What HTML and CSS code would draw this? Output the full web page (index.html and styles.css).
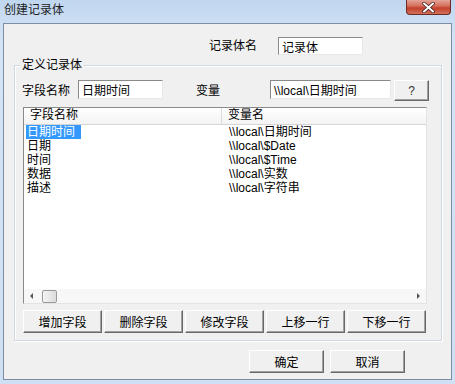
FILE: index.html
```html
<!DOCTYPE html>
<html lang="zh-CN">
<head>
  <meta charset="utf-8">
  <title>创建记录体</title>
  <link rel="stylesheet" href="styles.css">
</head>
<body>
  <div class="window">
    <div class="titlebar">
      <span class="title">创建记录体</span>
      <span class="close">
        <svg width="13" height="11" viewBox="0 0 13 11">
          <path d="M2 1.5 L11 9.5 M11 1.5 L2 9.5" stroke="#3b1a1a" stroke-width="3.4" stroke-linecap="round"/>
          <path d="M2 1.5 L11 9.5 M11 1.5 L2 9.5" stroke="#fff" stroke-width="2" stroke-linecap="round"/>
        </svg>
      </span>
    </div>

    <div class="client">
      <div class="name-row">
        <span class="label">记录体名</span>
        <div class="edit edit-name">记录体</div>
      </div>

      <div class="group">
        <div class="legend">定义记录体</div>

        <div class="field-row">
          <span class="label">字段名称</span>
          <div class="edit edit-field">日期时间</div>
          <span class="label label-var">变量</span>
          <div class="edit edit-var">\\local\日期时间</div>
          <div class="btn btn-help">?</div>
        </div>

        <div class="list">
          <div class="list-head">
            <div class="col col1">字段名称</div>
            <div class="col col2">变量名</div>
          </div>
          <div class="list-body">
            <div class="list-row">
              <div class="col col1"><span class="selected">日期时间</span></div>
              <div class="col col2">\\local\日期时间</div>
            </div>
            <div class="list-row">
              <div class="col col1"><span class="item">日期</span></div>
              <div class="col col2">\\local\$Date</div>
            </div>
            <div class="list-row">
              <div class="col col1"><span class="item">时间</span></div>
              <div class="col col2">\\local\$Time</div>
            </div>
            <div class="list-row">
              <div class="col col1"><span class="item">数据</span></div>
              <div class="col col2">\\local\实数</div>
            </div>
            <div class="list-row">
              <div class="col col1"><span class="item">描述</span></div>
              <div class="col col2">\\local\字符串</div>
            </div>
          </div>
          <div class="hscroll">
            <span class="arrow arrow-left"></span>
            <span class="thumb"></span>
            <span class="track"></span>
            <span class="arrow arrow-right"></span>
          </div>
        </div>

        <div class="btn-row">
          <div class="btn btn-wide">增加字段</div>
          <div class="btn btn-wide">删除字段</div>
          <div class="btn btn-wide">修改字段</div>
          <div class="btn btn-wide">上移一行</div>
          <div class="btn btn-wide">下移一行</div>
        </div>
      </div>

      <div class="dialog-btns">
        <div class="btn btn-dialog">确定</div>
        <div class="btn btn-dialog">取消</div>
      </div>
    </div>
  </div>
</body>
</html>
```

FILE: styles.css
```css
body {
  margin: 0;
  font-family: "Liberation Sans", "Noto Sans CJK SC", sans-serif;
  font-size: 12px;
  color: #000;
  background: #c9dcf2;
}

.window {
  width: 455px;
  height: 384px;
  box-sizing: border-box;
  padding: 0 3px 4px 3px;
  background: linear-gradient(to bottom, #c0d6ef 0px, #d4e4f6 40px, #cfe0f4 100%);
  display: flex;
  flex-direction: column;
}

.titlebar {
  height: 23px;
  display: flex;
  justify-content: space-between;
  align-items: flex-start;
}

.title {
  margin-top: 2px;
  padding-left: 1px;
  line-height: 16px;
  font-size: 12px;
  color: #1e1e1e;
}

.close {
  width: 45px;
  height: 15px;
  margin-right: 1px;
  box-sizing: border-box;
  border: 1px solid #6b2a24;
  border-top: none;
  border-radius: 0 0 4px 4px;
  background: linear-gradient(to bottom, #e3a497 0px, #d66e5c 6px, #c2402c 8px, #d2715a 14px);
  display: flex;
  justify-content: center;
  align-items: center;
}

.client {
  flex: 1;
  border: 1px solid #7d8ea3;
  background: #f0f0f0;
}

.label {
  line-height: 16px;
  white-space: nowrap;
}

.edit {
  box-sizing: border-box;
  background: #fff;
  border: 1px solid;
  border-color: #8a8a8a #e8e8e8 #e8e8e8 #8a8a8a;
  padding: 0 3px;
  white-space: nowrap;
  display: flex;
  align-items: center;
}

.name-row {
  margin-top: 13px;
  padding-left: 205px;
  display: flex;
  align-items: center;
  gap: 21px;
}

.edit-name {
  width: 85px;
  height: 18px;
}

.group {
  margin: 10px 0 0 10px;
  width: 428px;
  height: 276px;
  box-sizing: border-box;
  border: 1px solid #d0d7de;
  box-shadow: inset 1px 1px #fff, 1px 1px #fff;
}

.legend {
  display: table;
  margin: -8px 0 0 5px;
  padding: 0 2px;
  line-height: 14px;
  background: #f0f0f0;
}

.field-row {
  margin-top: 8px;
  padding-left: 7px;
  display: flex;
  align-items: flex-start;
}

.field-row .label {
  margin-top: 3px;
}

.edit-field {
  margin-left: 8px;
  width: 85px;
  height: 19px;
}

.label-var {
  margin-left: 33px;
}

.edit-var {
  margin-left: 50px;
  width: 121px;
  height: 19px;
}

.btn {
  box-sizing: border-box;
  background: #f0f0f0;
  border: 1px solid;
  border-color: #fff #696969 #696969 #fff;
  box-shadow: inset -1px -1px #a0a0a0;
  display: flex;
  justify-content: center;
  align-items: center;
  white-space: nowrap;
}

.btn-help {
  margin-left: 3px;
  width: 35px;
  height: 21px;
  color: #333;
}

.list {
  margin: 6px 0 0 8px;
  width: 404px;
  height: 197px;
  box-sizing: border-box;
  border: 1px solid;
  border-color: #8a8a8a #e3e3e3 #e3e3e3 #8a8a8a;
  background: #fff;
  display: flex;
  flex-direction: column;
}

.list-head {
  height: 16px;
  display: flex;
  border-bottom: 1px solid #d5d5d5;
  background: linear-gradient(to bottom, #fff, #f3f3f3);
  line-height: 15px;
}

.list-head .col1 {
  width: 198px;
  padding-left: 6px;
  border-right: 1px solid #dcdcdc;
}

.list-head .col2 {
  padding-left: 6px;
}

.col {
  box-sizing: border-box;
  white-space: nowrap;
}

.list-body {
  flex: 1;
}

.list-row {
  height: 14px;
  display: flex;
  line-height: 14px;
}

.list-row .col1 {
  width: 199px;
  padding-left: 2px;
}

.list-row .col2 {
  padding-left: 6px;
}

.item,
.selected {
  padding: 0 1px;
}

.selected {
  background: #3399ff;
  color: #fff;
  display: inline-block;
  width: 55px;
  box-sizing: border-box;
}

.hscroll {
  height: 14px;
  display: flex;
  align-items: center;
  background: #f7f7f7;
}

.arrow {
  width: 0;
  height: 0;
  border-top: 3px solid transparent;
  border-bottom: 3px solid transparent;
}

.arrow-left {
  margin-left: 6px;
  border-right: 3px solid #555;
}

.arrow-right {
  margin-right: 6px;
  border-left: 3px solid #555;
}

.thumb {
  margin-left: 9px;
  width: 15px;
  height: 13px;
  box-sizing: border-box;
  border: 1px solid #999;
  border-radius: 2px;
  background: linear-gradient(to right, #f4f4f4, #dcdcdc);
}

.track {
  flex: 1;
}

.btn-row {
  margin: 6px 0 0 8px;
  display: flex;
  gap: 2px;
}

.btn-wide {
  width: 79px;
  height: 23px;
}

.dialog-btns {
  margin-top: 9px;
  padding-left: 245px;
  display: flex;
  gap: 6px;
}

.btn-dialog {
  width: 75px;
  height: 23px;
}
```
